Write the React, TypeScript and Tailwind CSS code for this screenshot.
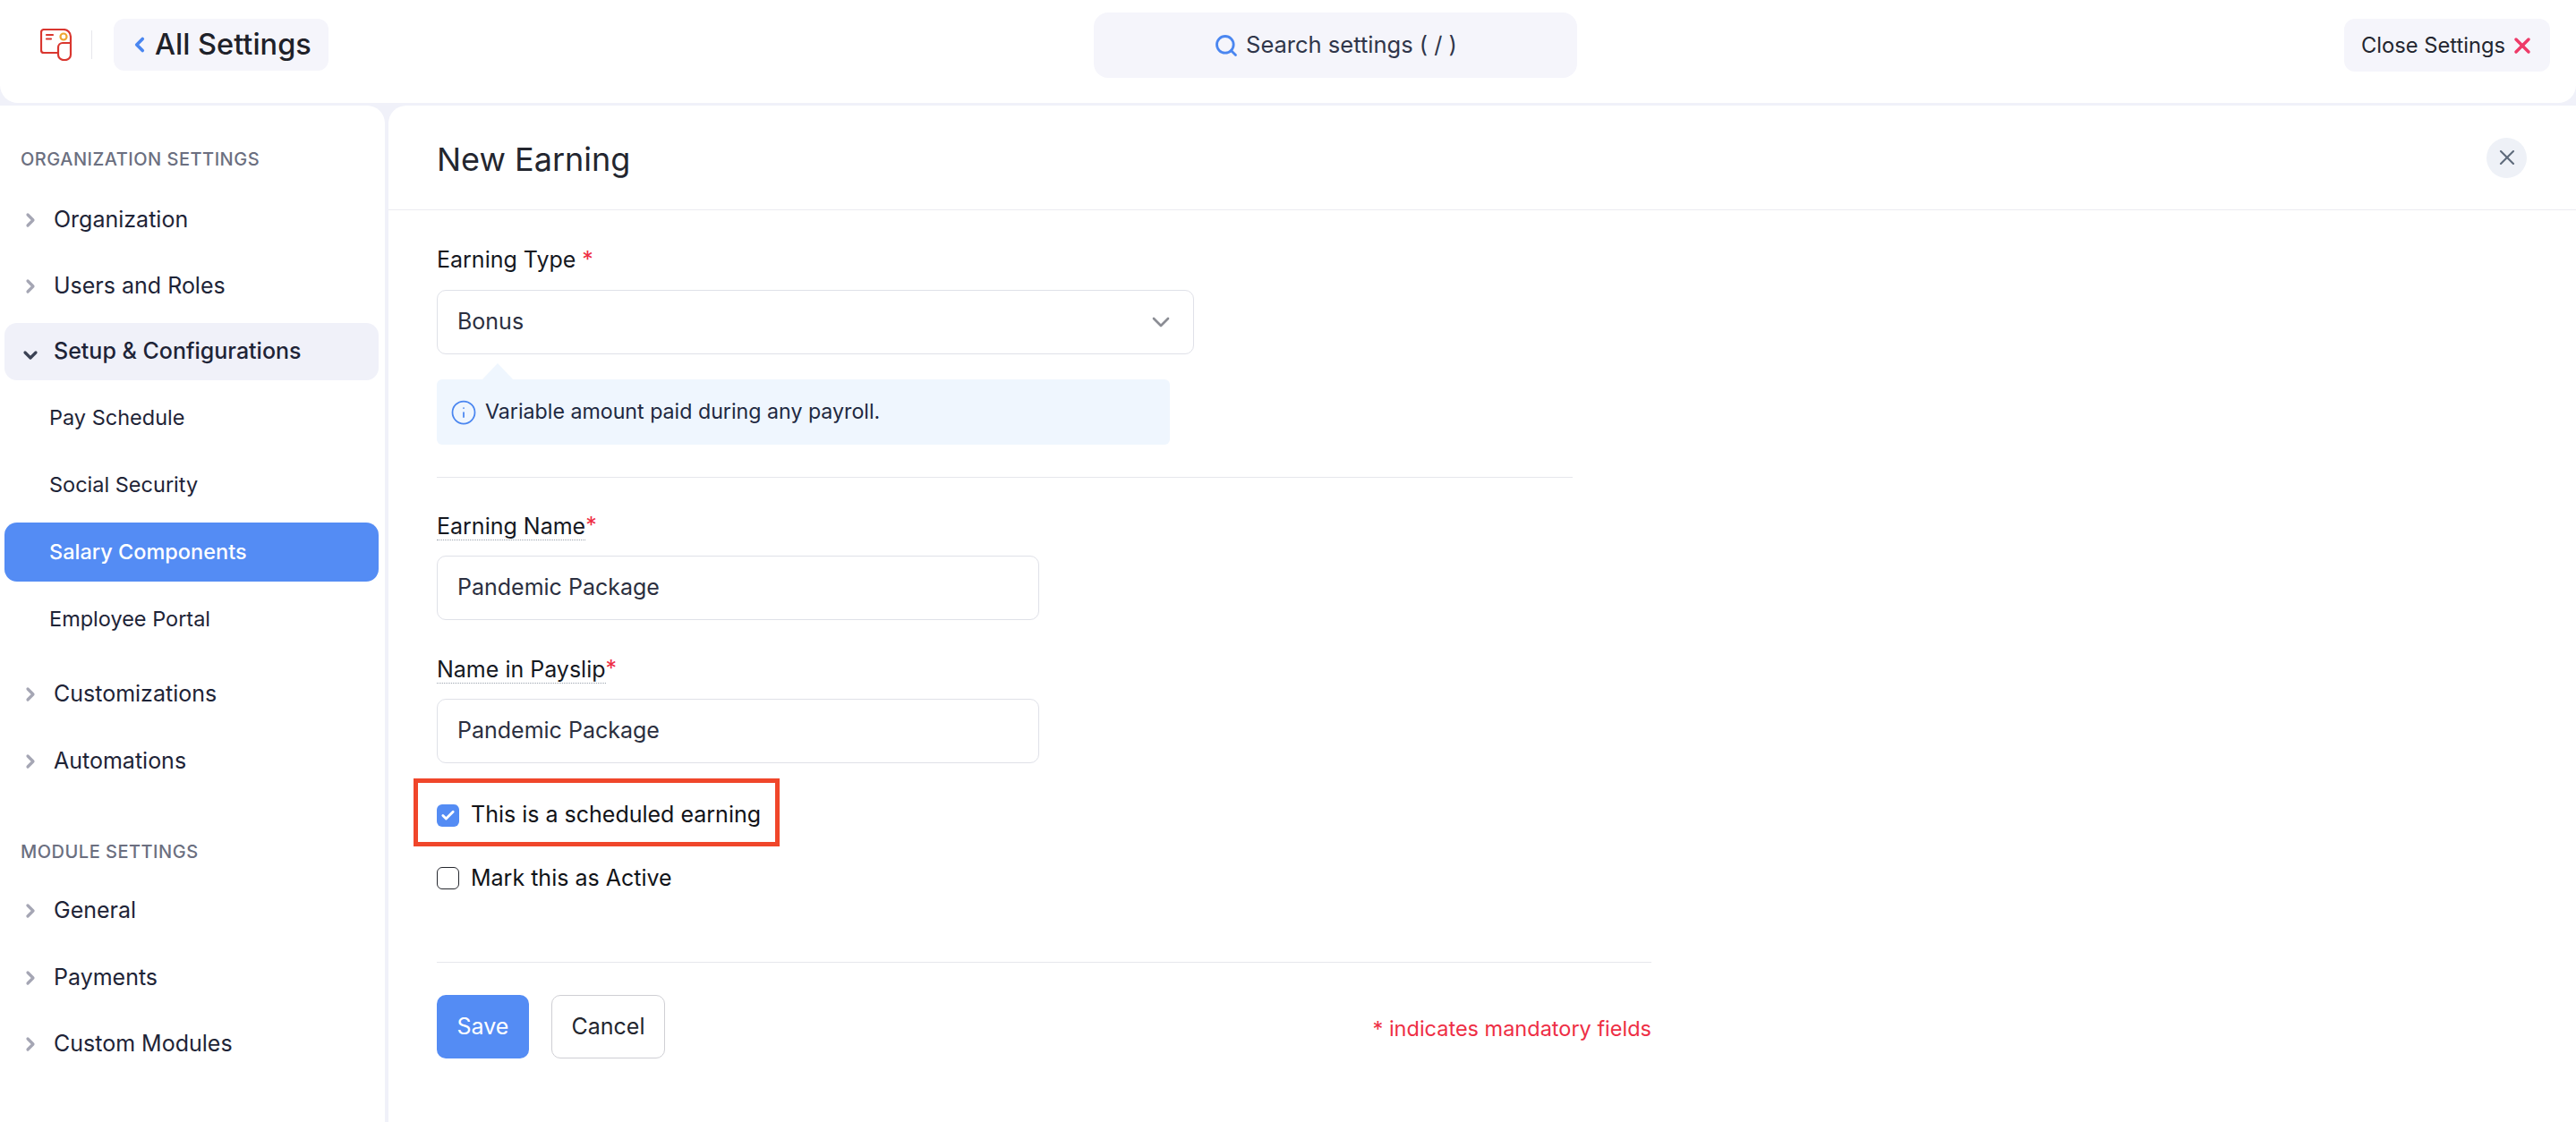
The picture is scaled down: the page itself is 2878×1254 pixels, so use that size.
import { ChevronDown, ChevronLeft, ChevronRight, Check, Info, Search, X } from "lucide-react";

const font = "font-['Inter',sans-serif]";

function NavItem({ label }: { label: string }) {
  return (
    <div className="flex h-[64px] items-center pl-[22px] pt-[2px] text-[25px] text-[#1e2437]">
      <ChevronRight className="mr-[14px] h-[24px] w-[24px] shrink-0 text-[#a5a6b4]" strokeWidth={3.2} />
      {label}
    </div>
  );
}

function SubItem({ label, active }: { label: string; active?: boolean }) {
  return (
    <div
      className={
        active
          ? "ml-[5px] mr-[7px] flex h-[66px] items-center rounded-[14px] bg-[#548cf4] pl-[50px] text-[23.5px] font-medium text-white"
          : "ml-[5px] mr-[7px] flex h-[66px] items-center pl-[50px] text-[23.5px] text-[#1e2437]"
      }
    >
      {label}
    </div>
  );
}

function SectionLabel({ label }: { label: string }) {
  return <div className="flex h-[30px] items-center pl-[23px] text-[20px] font-medium tracking-[0.5px] text-[#6b6f80]">{label}</div>;
}

function Logo() {
  return (
    <svg viewBox="0 0 36 36" className="h-[36px] w-[36px]" fill="none" stroke="#d9362f" strokeWidth="2.2" strokeLinejoin="round" strokeLinecap="round">
      <path d="M20 27H4a3 3 0 0 1-3-3V4a3 3 0 0 1 3-3h22a8 8 0 0 1 8 8v20a6 6 0 0 1-6 6h-2a6 6 0 0 1-6-6v-8a5 5 0 0 1 5-5h9" />
      <path d="M7 7h7M7 11.500h5" />
      <circle cx="26" cy="9" r="3.500" stroke="#eea530" />
    </svg>
  );
}

function FieldLabel({ text }: { text: string }) {
  return (
    <div className="flex h-[30px] items-center text-[25px] text-[#15181f]">
      <span className="border-b border-dotted border-[#9ca3af] leading-[30px]">{text}</span>
      <span className="text-[#ee2e45]">*</span>
    </div>
  );
}

function TextField({ value }: { value: string }) {
  return (
    <div className="flex h-[72px] w-[673px] items-center rounded-[10px] border border-[#dfe1e8] pl-[22px] text-[25px] text-[#2b2f40]">
      {value}
    </div>
  );
}

export default function App() {
  return (
    <div className={`${font} flex h-[1254px] w-[2878px] flex-col overflow-hidden bg-[#f0f1f9]`}>
      <header className="flex h-[115px] shrink-0 items-start rounded-b-[20px] bg-white pt-[14px]">
        <div className="mt-[7px] flex w-[1222px] shrink-0 items-center pl-[45px]">
          <Logo />
          <div className="ml-[21px] h-[32px] w-px bg-[#e6e7ec]" />
          <div className="ml-[24px] flex h-[58px] w-[240px] items-center rounded-[12px] bg-[#f5f5fb] pl-[16px] text-[32.500px] font-medium text-[#1e2129]">
            <ChevronLeft className="mr-[4px] h-[26px] w-[26px] text-[#4a86f0]" strokeWidth={3.4} />
            All Settings
          </div>
        </div>
        <div className="flex h-[73px] w-[540px] shrink-0 items-center justify-center rounded-[16px] bg-[#f5f5fb] text-[25.500px] text-[#30364a]">
          <Search className="mr-[8px] h-[28px] w-[28px] text-[#4a86f0]" strokeWidth={2.4} />
          Search settings ( / )
        </div>
        <div className="ml-auto mr-[29px] mt-[7px] flex h-[59px] w-[230px] items-center rounded-[12px] bg-[#f5f5fb] pl-[19px] text-[23.700px] text-[#23262f]">
          Close Settings
          <X className="ml-[5px] h-[28px] w-[28px] text-[#ee3a68]" strokeWidth={3} />
        </div>
      </header>

      <div className="mt-[3px] flex min-h-0 flex-1 gap-[4px]">
        <aside className="w-[430px] shrink-0 rounded-tr-[20px] bg-white pt-[45px]">
          <SectionLabel label="ORGANIZATION SETTINGS" />
          <div className="mt-[20px] flex flex-col gap-[10px]">
            <NavItem label="Organization" />
            <NavItem label="Users and Roles" />
            <div className="ml-[5px] mr-[7px] flex h-[64px] items-center rounded-[14px] bg-[#f0f1f9] pl-[17px] text-[25px] font-medium text-[#1e2437]">
              <ChevronDown className="mr-[14px] mt-[8px] h-[24px] w-[24px] shrink-0 text-[#3b4254]" strokeWidth={3.2} />
              Setup &amp; Configurations
            </div>
          </div>
          <div className="mt-[9px] flex flex-col gap-[9px]">
            <SubItem label="Pay Schedule" />
            <SubItem label="Social Security" />
            <SubItem label="Salary Components" active />
            <SubItem label="Employee Portal" />
          </div>
          <div className="mt-[18px] flex flex-col gap-[11px]">
            <NavItem label="Customizations" />
            <NavItem label="Automations" />
          </div>
          <div className="mt-[55px]">
            <SectionLabel label="MODULE SETTINGS" />
          </div>
          <div className="mt-[18px] flex flex-col gap-[10.500px]">
            <NavItem label="General" />
            <NavItem label="Payments" />
            <NavItem label="Custom Modules" />
          </div>
        </aside>

        <main className="min-w-0 flex-1 rounded-tl-[20px] bg-white">
          <div className="flex h-[117px] items-center justify-between border-b border-[#ececf1] pl-[54px] pr-[55px]">
            <h1 className="mt-[4px] text-[36px] font-normal text-[#23262f]">New Earning</h1>
            <div className="flex h-[45px] w-[45px] items-center justify-center rounded-full bg-[#eef1f7]">
              <X className="h-[28px] w-[28px] text-[#5f6b7c]" strokeWidth={1.8} />
            </div>
          </div>

          <div className="w-[1411px] pl-[54px] pt-[41px]">
            <div className="flex h-[30px] items-center text-[25px] text-[#15181f]">
              Earning Type <span className="ml-[7px] text-[#ee2e45]">*</span>
            </div>
            <div className="mt-[18px] flex h-[72px] w-[846px] items-center justify-between rounded-[10px] border border-[#dfe1e8] pl-[22px] pr-[20px] text-[25px] text-[#2b2f40]">
              Bonus
              <ChevronDown className="h-[32px] w-[32px] text-[#8b8d94]" strokeWidth={2} />
            </div>
            <div className="relative mt-[28px] flex h-[73px] w-[819px] items-center rounded-[6px] bg-[#eff6fe] pl-[15px] text-[23.200px] text-[#1e2941]">
              <div className="absolute left-[51px] top-[-18px] h-0 w-0 border-x-[17px] border-b-[18px] border-x-transparent border-b-[#eff6fe]" />
              <Info className="mr-[9px] h-[30px] w-[30px] text-[#4a86f0]" strokeWidth={1.4} />
              Variable amount paid during any payroll.
            </div>
            <div className="mt-[36px] h-px w-[1269px] bg-[#e6e7ec]" />

            <div className="mt-[39px]">
              <FieldLabel text="Earning Name" />
            </div>
            <div className="mt-[18px]">
              <TextField value="Pandemic Package" />
            </div>
            <div className="mt-[40px]">
              <FieldLabel text="Name in Payslip" />
            </div>
            <div className="mt-[18px]">
              <TextField value="Pandemic Package" />
            </div>

            <div className="relative mt-[46px] flex h-[25px] items-center text-[25px] text-[#111318]">
              <div className="absolute left-[-26px] top-[-29px] h-[76px] w-[409px] border-[5px] border-[#f0462a]" />
              <div className="mr-[13px] flex h-[25px] w-[25px] items-center justify-center rounded-[6px] bg-[#548cf4]">
                <Check className="h-[17px] w-[17px] text-white" strokeWidth={4} />
              </div>
              <span className="-mt-[2px]">This is a scheduled earning</span>
            </div>
            <div className="mt-[45px] flex h-[25px] items-center text-[25px] text-[#111318]">
              <div className="mr-[13px] h-[25px] w-[25px] rounded-[6px] border border-[#25272e]" />
              Mark this as Active
            </div>

            <div className="mt-[81px] h-px bg-[#e6e7ec]" />
            <div className="mt-[36px] flex items-start">
              <button className="h-[71px] w-[103px] rounded-[10px] bg-[#548cf4] text-[25px] text-white">Save</button>
              <button className="ml-[25px] h-[71px] w-[127px] rounded-[10px] border border-[#cfcfd4] text-[25px] text-[#23262f]">Cancel</button>
              <div className="ml-auto mt-[22px] text-[23.500px] leading-[32px] text-[#ee2e45]">* indicates mandatory fields</div>
            </div>
          </div>
        </main>
      </div>
    </div>
  );
}
